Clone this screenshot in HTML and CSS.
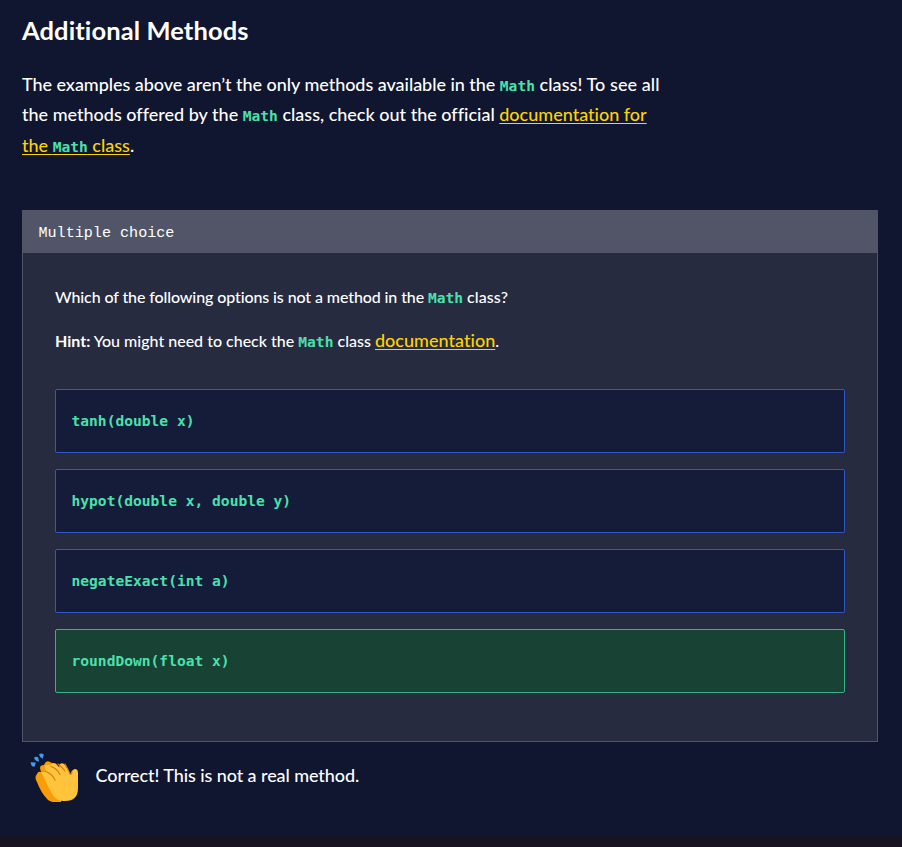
FILE: index.html
```html
<!DOCTYPE html>
<html lang="en">
<head>
<meta charset="utf-8">
<title>Additional Methods</title>
<link rel="stylesheet" href="styles.css">
</head>
<body>
<main class="lesson">
  <h1 class="title">Additional Methods</h1>
  <p class="intro">
    <span class="line line-1">The examples above aren’t the only methods available in the <code>Math</code> <span class="tail">class! To see all</span></span>
    <span class="line line-2">the methods offered by the <code>Math</code> class, check out the official <a href="#">documentation for</a></span>
    <span class="line line-3"><a href="#">the <code>Math</code> class</a>.</span>
  </p>
  <section class="quiz">
    <header class="quiz-header">Multiple choice</header>
    <div class="quiz-body">
      <p class="question">Which of the following options is not a method in the <code>Math</code> <span class="tail">class?</span></p>
      <p class="question hint"><strong>Hint:</strong> You might need to check the <code>Math</code> class <a href="#">documentation</a>.</p>
      <ul class="options">
        <li class="option"><code>tanh(double x)</code></li>
        <li class="option"><code>hypot(double x, double y)</code></li>
        <li class="option"><code>negateExact(int a)</code></li>
        <li class="option correct"><code>roundDown(float x)</code></li>
      </ul>
    </div>
  </section>
  <div class="feedback">
    <svg class="clap" viewBox="0 0 50 50" aria-hidden="true">
      <g fill="#429bf0">
        <path d="M.800 10.300l5 .2-1 3.800q-2 1-3.300-.8-.8-1.600-.7-3.200z"/>
        <path d="M4 5.700q2-1.800 4.300-.2L9 9.800Q5 9 4 5.700z"/>
        <path d="M9 2.500q2-1.800 4.800 0l-1 4.200Q9.500 5.500 9 2.500z"/>
      </g>
      <path fill="#f99d07" d="M7 22q1-3 4-2l-1-4q0-3 4-3l1-2q2-3 5-1l4 2 12 17-5 21q-6 2-13-2Q11 41 7 30q-3-5 0-8z"/>
      <path fill="#ffc43c" d="M11 20q2-3 5-1l-1-3q-1-3 2-3 2-1 4 1 0-3 3-3 2 0 4 3l2 2q-2-3 0-4 3-2 5 1 4 6 5.500 10 .5-5 4.500-6 3 0 3 4v15q0 13-13 13-9 1-14-9z"/>
      <path fill="none" stroke="#d87b12" stroke-width="1.200" stroke-linecap="round" d="M17 20q5 2 8 8M21 14.500q6 2 9 8M28 12q4 3 7 7M35 12q3 5 5 10 1 1 2-2M12 19.500q2-1 4 0"/>
    </svg>
    <p class="feedback-text">Correct! This is not a real method.</p>
  </div>
</main>
</body>
</html>
```

FILE: styles.css
```css
* { box-sizing: border-box; }
body {
  margin: 0;
  min-height: 847px;
  background: #17141f;
  color: #fff;
  font-family: Lato, "Liberation Sans", sans-serif;
  font-weight: 500;
  font-variant-ligatures: none;
}
.lesson {
  height: 835px;
  padding: 13px 24px 0 22px;
  background: #10162f;
}
.title {
  margin: 0;
  font-size: 25.500px;
  line-height: 34px;
  font-weight: 700;
  letter-spacing: 0.100px;
}
.intro {
  margin: 22px 0 50px;
  font-size: 18px;
  line-height: 30.300px;
}
.line { display: block; white-space: nowrap; }
.line-1 { letter-spacing: -0.040px; }
.tail { letter-spacing: 0.080px; }
code {
  color: #4be1ac;
  font: 700 14.600px "DejaVu Sans Mono", monospace;
  letter-spacing: 0;
}
a { color: #ffd300; text-decoration: underline; text-underline-offset: 2px; text-decoration-thickness: 1px; }
.quiz {
  height: 532px;
  border: 1px solid #515567;
  background: #262b40;
}
.quiz-header {
  height: 42px;
  padding-left: 15.500px;
  background: #515567;
  font: 400 15.100px/44px "Liberation Mono", monospace;
}
.quiz-body { padding: 32px; }
.question {
  height: 24px;
  margin: 0 0 20px;
  font-size: 16px;
  line-height: 24px;
  white-space: nowrap;
  letter-spacing: -0.105px;
}
.hint { line-height: 22px; letter-spacing: 0; }
.question a { font-size: 18px; letter-spacing: 0.030px; }
.options {
  display: grid;
  gap: 16px;
  margin: 36px 0 0;
  padding: 0;
  list-style: none;
}
.option {
  display: flex;
  align-items: center;
  height: 64px;
  padding-left: 15.500px;
  border: 1px solid #2e5ac5;
  border-radius: 2px;
  background: #141c3a;
}
.option.correct { border-color: #39b386; background: #184234; }
.feedback { display: flex; align-items: center; height: 70px; padding-left: 8px; }
.clap { width: 50px; height: 50px; }
.feedback-text { margin: -3px 0 0 15.500px; font-size: 18px; letter-spacing: -0.080px; }
```
